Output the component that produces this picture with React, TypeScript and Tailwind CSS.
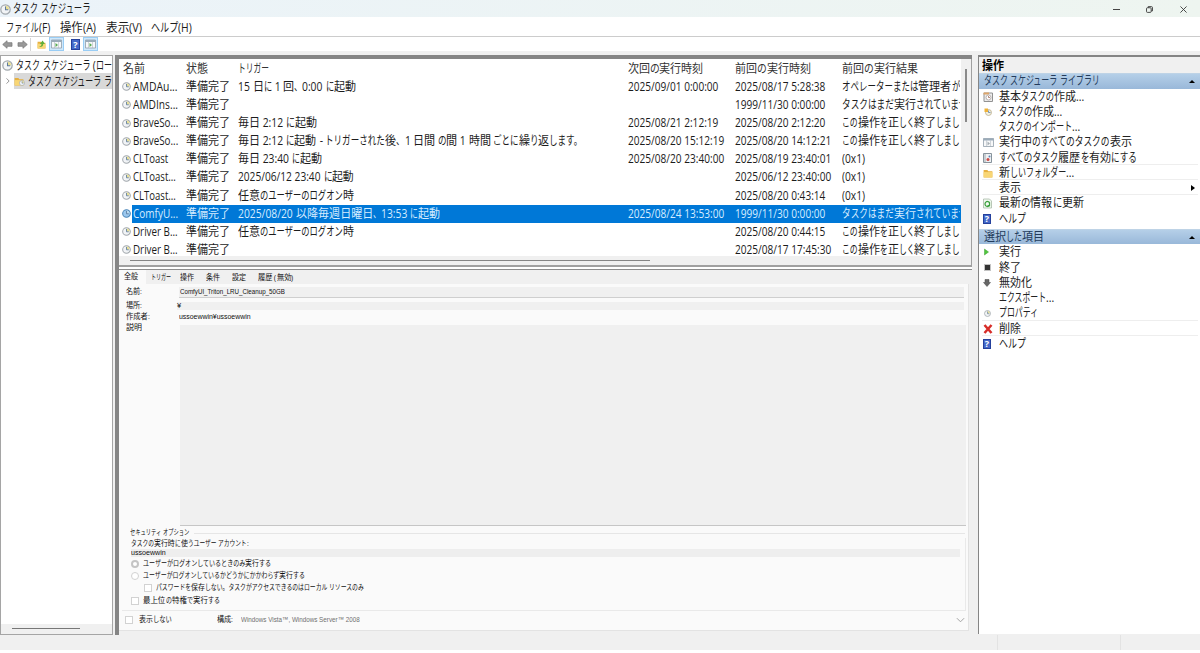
import { useLayoutEffect, useRef, type ReactNode } from "react";

const FONT = "font-['Open_Sans','Noto_Sans_CJK_JP',sans-serif]";

const KANA = /^[\u3001-\u30ff]/;
const KANJI = /^[\u3400-\u9fff]/;

// UI text with condensed kana: kana runs take the room left in the given width,
// unless that would squeeze them too much, then every run shares it
function Label({ text, w, className = "" }: { text: string; w: number; className?: string }) {
  const ref = useRef<HTMLSpanElement>(null);
  const runs = text.match(/[\u3001-\u30ff]+|[\u3400-\u9fff]+|[^\u3001-\u9fff]+/g) ?? [];

  useLayoutEffect(() => {
    if (!ref.current) return;
    const outers = Array.from(ref.current.children) as HTMLElement[];
    const inners = outers.map((o) => o.firstElementChild as HTMLElement);
    const widths = inners.map((el) => el.offsetWidth);
    const base = runs.map((r) => (KANA.test(r) ? 0.74 : KANJI.test(r) ? 0.92 : 0.86));
    let fixed = 0;
    let kana = 0;
    runs.forEach((r, i) => {
      if (KANA.test(r)) kana += widths[i];
      else fixed += widths[i] * base[i];
    });
    const k = kana > 0 ? (w - fixed) / kana : 0;
    const all = w / (fixed + kana * 0.74);
    runs.forEach((r, i) => {
      let s = base[i] * all;
      if (k > 0.62 && k < 0.9) s = KANA.test(r) ? k : base[i];
      outers[i].style.width = `${widths[i] * s}px`;
      inners[i].style.transform = `scaleX(${s})`;
    });
  }, [text, w]);

  return (
    <span ref={ref} className={`flex shrink-0 items-baseline whitespace-pre ${className}`}>
      {runs.map((r, i) => (
        <span key={i} className="block">
          <span className="inline-block origin-left">{r}</span>
        </span>
      ))}
    </span>
  );
}

function Clock({ className = "size-[9px]", selected = false }: { className?: string; selected?: boolean }) {
  return (
    <svg viewBox="0 0 16 16" className={`shrink-0 ${className}`}>
      <circle cx="8" cy="8" r="6.8" fill={selected ? "#9cc8ee" : "#f2f4f6"} stroke={selected ? "#4d86b8" : "#a2a8ad"} strokeWidth="1.8" />
      <path d="M8 8V2.5A5.5 5.5 0 0 1 13.5 8z" fill={selected ? "#b9d9ef" : "#e8df96"} />
      <path d="M8 3.5V8.5H12" fill="none" stroke="#5d7a9c" strokeWidth="1.5" />
    </svg>
  );
}

function HelpIcon({ className = "h-[11px] w-[9px]" }: { className?: string }) {
  return (
    <span className={`flex shrink-0 items-center justify-center border border-[#24409c] bg-[#4468c8] text-[9px] leading-none font-bold text-white ${className}`}>?</span>
  );
}

function FolderIcon({ className = "size-[11px]", arrow = false }: { className?: string; arrow?: boolean }) {
  return (
    <svg viewBox="0 0 16 16" className={`shrink-0 ${className}`}>
      <path d="M1 3h6l1.500 2H15v10H1z" fill="#e6b040" />
      <path d="M1 6.500h14V15H1z" fill="#f8d675" />
      {arrow && <path d="M3 12c3 0 5-2 5-5H5l5-6 4 6h-3c0 4-3 6-8 5z" fill="#5fae3a" />}
    </svg>
  );
}

function WindowIcon({ className = "h-[10px] w-[11px]", mark = "#54a94d" }: { className?: string; mark?: string }) {
  return (
    <svg viewBox="0 0 22 18" className={`shrink-0 ${className}`}>
      <path d="M1 1h20v16H1z" fill="#f7f8f9" stroke="#8b99a5" strokeWidth="1.5" />
      <path d="M1 1h20v4H1z" fill="#9aabb9" />
      <path d="M7 5v12M15 5v12" stroke="#a6b0b8" />
      <path d="M9 7l5 4-5 4z" fill={mark} />
    </svg>
  );
}

function Arrow({ flip = false }: { flip?: boolean }) {
  return (
    <svg viewBox="0 0 12 10" className={`h-[9px] w-[11px] shrink-0 ${flip ? "rotate-180" : ""}`}>
      <path d="M.7 5L5.500.8V3H11v4H5.500v2.200z" fill="#999" stroke="#757575" strokeWidth=".8" />
    </svg>
  );
}

type Task = {
  name: [string, number];
  trigger?: [string, number];
  next?: [string, number];
  prev: [string, number];
  result: [string, number];
  selected?: boolean;
};

const OK: [string, number] = ["この操作を正しく終了しまし", 118];
const NOT_RUN: [string, number] = ["タスクはまだ実行されていませ", 125];

const tasks: Task[] = [
  { name: ["AMDAu...", 45], trigger: ["15 日に 1 回、0:00 に起動", 118], next: ["2025/09/01 0:00:00", 90], prev: ["2025/08/17 5:28:38", 90], result: ["オペレーターまたは管理者が", 118] },
  { name: ["AMDIns...", 45], prev: ["1999/11/30 0:00:00", 90], result: NOT_RUN },
  { name: ["BraveSo...", 45], trigger: ["毎日 2:12 に起動", 79], next: ["2025/08/21 2:12:19", 90], prev: ["2025/08/20 2:12:20", 90], result: OK },
  { name: ["BraveSo...", 45], trigger: ["毎日 2:12 に起動 - トリガーされた後、1 日間 の間 1 時間 ごとに繰り返します。", 345], next: ["2025/08/20 15:12:19", 96], prev: ["2025/08/20 14:12:21", 96], result: OK },
  { name: ["CLToast", 35], trigger: ["毎日 23:40 に起動", 84], next: ["2025/08/20 23:40:00", 96], prev: ["2025/08/19 23:40:01", 96], result: ["(0x1)", 23] },
  { name: ["CLToast...", 43], trigger: ["2025/06/12 23:40 に起動", 116], prev: ["2025/06/12 23:40:00", 96], result: ["(0x1)", 23] },
  { name: ["CLToast...", 43], trigger: ["任意のユーザーのログオン時", 116], prev: ["2025/08/20 0:43:14", 90], result: ["(0x1)", 23] },
  { name: ["ComfyU...", 45], trigger: ["2025/08/20 以降毎週日曜日、13:53 に起動", 202], next: ["2025/08/24 13:53:00", 96], prev: ["1999/11/30 0:00:00", 90], result: NOT_RUN, selected: true },
  { name: ["Driver B...", 45], trigger: ["任意のユーザーのログオン時", 116], prev: ["2025/08/20 0:44:15", 90], result: OK },
  { name: ["Driver B...", 45], prev: ["2025/08/17 17:45:30", 96], result: OK },
];

const COLS = "grid grid-cols-[14px_53px_52px_389.500px_107.500px_107px_118px] items-center";

function TaskList() {
  return (
    <div className="flex h-[206px] bg-[#f0f0f0]">
      <div className="w-[842px] overflow-hidden">
        <div className="h-[197px] overflow-hidden bg-white text-[12px] leading-[18px] text-[#1c1c1c]">
          <div className={`${COLS} h-[18.800px] pt-px text-[#333]`}>
            <Label text="名前" w={22} className="col-span-2 pl-1" />
            <Label text="状態" w={22} />
            <Label text="トリガー" w={31} />
            <Label text="次回の実行時刻" w={76} />
            <Label text="前回の実行時刻" w={76} />
            <Label text="前回の実行結果" w={76} />
          </div>
          {tasks.map((t, i) => (
            <div
              key={i}
              className={`${COLS} h-[18.120px] ${t.selected ? "bg-[linear-gradient(to_right,white_13px,#0078d7_13px)] text-[#d5ecff]" : ""}`}
            >
              <Clock className="ml-[3px] size-[9px]" selected={t.selected} />
              <Label text={t.name[0]} w={t.name[1]} />
              <Label text="準備完了" w={44} />
              {t.trigger ? <Label text={t.trigger[0]} w={t.trigger[1]} /> : <span />}
              {t.next ? <Label text={t.next[0]} w={t.next[1]} /> : <span />}
              <Label text={t.prev[0]} w={t.prev[1]} />
              <div className="overflow-hidden">
                <Label text={t.result[0]} w={t.result[1]} />
              </div>
            </div>
          ))}
        </div>
        <div className="mt-[4px] ml-[11px] h-px w-[520px] bg-[#858585]" />
      </div>
      <div className="flex-1 pt-[10px] pl-[4px]">
        <div className="h-[53px] w-[1.500px] bg-[#8a8a8a]" />
      </div>
    </div>
  );
}

function Box({ round = false, checked = false }: { round?: boolean; checked?: boolean }) {
  return (
    <span
      className={`size-[8px] shrink-0 bg-white ${round ? "rounded-full" : ""} ${checked ? "border-[2.500px] border-[#c4c4c4]" : "border border-[#d2d2d2]"}`}
    />
  );
}

function Details() {
  return (
    <div className="h-[364px] bg-[#f0f0f0] font-['Liberation_Sans','Noto_Sans_CJK_JP',sans-serif] text-[7.500px] leading-[10px] text-[#111]">
      <div className="flex h-[14px] items-end">
        <div className="flex h-[14px] w-[27px] items-center bg-[#fafafa] pl-[5px]">
          <Label text="全般" w={14} />
        </div>
        <div className="flex h-[13px] items-center">
          <Label text="トリガー" w={20} className="ml-[5px]" />
          <Label text="操作" w={14} className="ml-[9px]" />
          <Label text="条件" w={14} className="ml-[12px]" />
          <Label text="設定" w={14} className="ml-[12px]" />
          <Label text="履歴 (無効)" w={36} className="ml-[12px]" />
        </div>
      </div>
      <div className="h-[347px] w-[850px] border-r border-b border-[#e3e3e3] bg-[#fafafa]">
        <div className="flex h-[16.500px] items-center pl-[7px]">
          <Label text="名前:" w={16} className="w-[53px]" />
          <div className="flex h-[11px] w-[785px] items-center border-b border-[#cfcfcf] bg-[#f0f0f0]">
            <Label text="ComfyUI_Triton_LRU_Cleanup_50GB" w={105} className="pl-px" />
          </div>
        </div>
        <div className="flex h-[11px] items-center pl-[7px]">
          <Label text="場所:" w={16} className="w-[51px]" />
          <div className="flex h-[8px] w-[787px] items-center bg-[#f0f0f0]">
            <Label text="¥" w={4} />
          </div>
        </div>
        <div className="flex h-[11px] items-center pl-[7px]">
          <Label text="作成者:" w={24} className="w-[53px]" />
          <Label text="ussoewwin¥ussoewwin" w={72} />
        </div>
        <div className="flex h-[204.500px] items-start pl-[7px]">
          <div className="h-[10px] w-[54px] overflow-hidden">
            <Label text="説明" w={16} />
          </div>
          <div className="mt-[2px] h-[201px] w-[786px] border-b border-[#c6c6c6] bg-[#f0f0f0]" />
        </div>
        <div className="flex h-[11px] items-end">
          <Label text="セキュリティ オプション" w={60} className="ml-[11px]" />
          <span className="mb-[4px] ml-1 h-px w-[771px] bg-[#e6e6e6]" />
        </div>
        <div className="ml-[3px] h-[73px] w-[844px] border-r border-b border-[#e9e9e9] pl-[9px]">
          <Label text="タスクの実行時に使うユーザー アカウント:" w={118} className="h-[11px] pt-px" />
          <div className="flex h-[8px] w-[829px] items-center bg-[#eeeeee]">
            <Label text="ussoewwin" w={35} />
          </div>
          <div className="flex h-[13px] items-center gap-[4px]">
            <Box round checked />
            <Label text="ユーザーがログオンしているときのみ実行する" w={128} />
          </div>
          <div className="flex h-[12px] items-center gap-[4px]">
            <Box round />
            <Label text="ユーザーがログオンしているかどうかにかかわらず実行する" w={162} />
          </div>
          <div className="flex h-[12px] items-center gap-[4px] pl-[13px]">
            <Box />
            <Label text="パスワードを保存しない。タスクがアクセスできるのはローカル リソースのみ" w={208} />
          </div>
          <div className="flex h-[14px] items-center gap-[4px]">
            <Box />
            <Label text="最上位の特権で実行する" w={77} />
          </div>
        </div>
        <div className="flex h-[17px] items-center pl-[6px]">
          <Box />
          <Label text="表示しない" w={33} className="ml-[6px]" />
          <Label text="構成:" w={16} className="ml-[45px]" />
          <Label text="Windows Vista™, Windows Server™ 2008" w={119} className="ml-[8px] text-[#707070]" />
          <svg viewBox="0 0 10 6" className="ml-[596px] h-[6px] w-[9px]">
            <path d="M1 1l4 4 4-4" fill="none" stroke="#999" />
          </svg>
        </div>
      </div>
    </div>
  );
}

function ActionRow({ icon, text, w, line = false, more = false }: { icon?: ReactNode; text: string; w: number; line?: boolean; more?: boolean }) {
  return (
    <div className={`ml-[3px] flex h-[15.250px] w-[216px] items-center border-b pt-[2px] ${line ? "border-[#eeeeee]" : "border-transparent"}`}>
      <span className="flex w-[17px] items-center pl-px">{icon}</span>
      <Label text={text} w={w} />
      {more && <span className="mr-[3px] ml-auto border-y-[3.500px] border-l-[4px] border-y-transparent border-l-black" />}
    </div>
  );
}

function ActionHeader({ text, w }: { text: string; w: number }) {
  return (
    <div className="flex h-[15.500px] items-center justify-between border-t border-[#bed3e6] bg-linear-to-b from-[#b5cfe8] to-[#99b8d9] pr-[5px] pl-[5px] text-[#233c5c]">
      <Label text={text} w={w} />
      <span className="border-x-[3px] border-b-[3.500px] border-x-transparent border-b-black" />
    </div>
  );
}

function Actions() {
  return (
    <aside className="h-[579px] w-[222px] overflow-hidden border-t-2 border-l-[1.500px] border-[#858585] bg-white text-[12px] leading-[14px] text-[#222]">
      <div className="h-[16px] bg-[#f0f0f0] pt-[2px] pl-[3px] font-bold text-black">
        <Label text="操作" w={22} />
      </div>
      <ActionHeader text="タスク スケジューラ ライブラリ" w={116} />
      <ActionRow
        text="基本タスクの作成..."
        w={85}
        icon={
          <svg viewBox="0 0 20 20" className="size-[10px]">
            <path d="M2 2h17v17H2z" fill="#ececec" stroke="#929292" strokeWidth="2" />
            <path d="M1 1h11v4H1z" fill="#dea66b" />
            <circle cx="11" cy="11" r="5" fill="#fff" stroke="#a59b99" strokeWidth="1.500" />
            <path d="M11 8v3h3" fill="none" stroke="#9a6251" strokeWidth="1.500" />
          </svg>
        }
      />
      <ActionRow
        text="タスクの作成..."
        w={63}
        icon={
          <svg viewBox="0 0 16 16" className="ml-px size-[8px]">
            <circle cx="9" cy="9" r="6" fill="#f4f0e0" stroke="#b5aa87" strokeWidth="1.500" />
            <path d="M1 1h7v7H1z" fill="#efb237" />
            <path d="M9 5v4h4" fill="none" stroke="#567ba3" strokeWidth="1.500" />
          </svg>
        }
      />
      <ActionRow text="タスクのインポート..." w={81} />
      <ActionRow text="実行中のすべてのタスクの表示" w={133} icon={<WindowIcon mark="#a5adb3" className="h-[9px] w-[11px]" />} />
      <ActionRow
        text="すべてのタスク履歴を有効にする"
        w={138}
        line
        icon={
          <svg viewBox="0 0 18 20" className="h-[10px] w-[9px]">
            <path d="M1 1h16v18H1z" fill="#eef1f3" stroke="#87939c" strokeWidth="2" />
            <path d="M4 2v16" stroke="#a1abb2" strokeWidth="2" />
            <circle cx="10" cy="13" r="3" fill="#cc4945" />
            <circle cx="13" cy="7" r="2" fill="#5c83b4" />
          </svg>
        }
      />
      <ActionRow text="新しいフォルダー..." w={75} line icon={<FolderIcon className="size-[10px]" />} />
      <ActionRow text="表示" w={22} line more />
      <ActionRow
        text="最新の情報に更新"
        w={85}
        icon={
          <svg viewBox="0 0 18 20" className="h-[11px] w-[9px]">
            <path d="M1 1h12l4 4v14H1z" fill="#f3faf1" stroke="#a4b6a3" strokeWidth="1.500" />
            <path d="M13 14a5 5 0 1 1 0-6v6h-4" fill="none" stroke="#3ba03e" strokeWidth="2.500" />
          </svg>
        }
      />
      <ActionRow text="ヘルプ" w={27} icon={<HelpIcon className="h-[10px] w-[8px]" />} />
      <div className="h-[3px]" />
      <ActionHeader text="選択した項目" w={60} />
      <ActionRow
        text="実行"
        w={22}
        icon={
          <svg viewBox="0 0 10 14" className="ml-px h-[8px] w-[5px]">
            <path d="M1 1l8 6-8 6z" fill="#50c63c" stroke="#3a9f31" />
          </svg>
        }
      />
      <ActionRow text="終了" w={22} icon={<span className="ml-px size-[7px] border border-[#c3c3c3] bg-[#333]" />} />
      <ActionRow
        text="無効化"
        w={33}
        icon={
          <svg viewBox="0 0 16 16" className="size-[8px]">
            <path d="M4 1h8v6h3l-7 8-7-8h3z" fill="#666" stroke="#444" />
          </svg>
        }
      />
      <ActionRow text="エクスポート..." w={55} />
      <ActionRow text="プロパティ" w={39} line icon={<Clock className="ml-px size-[7px]" />} />
      <ActionRow
        text="削除"
        w={22}
        line
        icon={
          <svg viewBox="0 0 20 20" className="size-[10px]">
            <path d="M3 2l14 16M17 2L3 18" stroke="#d72d28" strokeWidth="5" />
          </svg>
        }
      />
      <ActionRow text="ヘルプ" w={27} icon={<HelpIcon className="h-[10px] w-[8px]" />} />
    </aside>
  );
}

export default function App() {
  return (
    <div className={`${FONT} flex h-[653px] w-[1200px] flex-col overflow-hidden bg-white text-[12px] text-[#1c1c1c]`}>
      {/* Title bar */}
      <header className="flex h-[17px] shrink-0 items-center bg-linear-to-r from-[#ebf3f9] to-[#eef5f0] pt-px leading-[16px]">
        <Clock className="size-[11px]" />
        <Label text="タスク スケジューラ" w={77} className="ml-[2px]" />
        <div className="ml-auto flex items-center pr-[13px]">
          <span className="h-px w-[7px] bg-[#444]" />
          <svg viewBox="0 0 8 8" className="ml-[26px] size-[7px]" fill="none" stroke="#333">
            <rect x=".6" y="2" width="5.300" height="5.300" rx="1" />
            <path d="M2.500 2V.7h3.700Q7.400.7 7.400 2v3.600H6" />
          </svg>
          <svg viewBox="0 0 8 8" className="ml-[27px] size-[7px]" stroke="#333">
            <path d="M.5.5l7 7M7.500.5l-7 7" />
          </svg>
        </div>
      </header>

      {/* Menu */}
      <nav className="flex h-[20px] shrink-0 items-center border-b border-[#cccccc] pt-[2px] pl-[6px] leading-[16px]">
        <Label text="ファイル(F)" w={44} />
        <Label text="操作(A)" w={36} className="ml-[10px]" />
        <Label text="表示(V)" w={36} className="ml-[10px]" />
        <Label text="ヘルプ(H)" w={41} className="ml-[9px]" />
      </nav>

      {/* Toolbar */}
      <div className="flex h-[14px] shrink-0 items-center pl-[2px]">
        <Arrow />
        <span className="w-[4px]" />
        <Arrow flip />
        <span className="ml-[2px] h-[13px] w-px bg-[#d6d6d6]" />
        <FolderIcon className="ml-[6px] size-[9px]" arrow />
        <span className="ml-[3px] flex h-[14px] w-[15px] items-center justify-center border border-[#99cdf5] bg-[#cfe8fb]">
          <WindowIcon />
        </span>
        <HelpIcon className="ml-[7px] h-[11px] w-[9px]" />
        <span className="ml-[3px] flex h-[14px] w-[15px] items-center justify-center border border-[#99cdf5] bg-[#cfe8fb]">
          <WindowIcon />
        </span>
      </div>

      <main className="flex h-[599px] shrink-0 bg-[#f0f0f0] pt-[4px]">
        {/* Tree */}
        <aside className="flex h-[580px] w-[113px] flex-col overflow-hidden border border-[#a5a5a5] bg-white leading-[17px]">
          <div className="flex h-[17px] items-center pt-px pl-px">
            <Clock className="size-[11px]" />
            <Label text="タスク スケジューラ (ロー" w={96} className="ml-[3px]" />
          </div>
          <div className="flex h-[16px] items-center">
            <svg viewBox="0 0 5 8" className="ml-[5px] h-[6px] w-[4px]">
              <path d="M.5.5L4 4 .5 7.500" fill="none" stroke="#777" />
            </svg>
            <div className="ml-[4px] flex h-[16px] flex-1 items-center overflow-hidden bg-[#d9d9d9]">
              <span className="flex items-end">
                <FolderIcon className="size-[10px]" />
                <Clock className="-ml-[5px] size-[6px]" />
              </span>
              <Label text="タスク スケジューラ ラ" w={84} className="ml-[3px]" />
            </div>
          </div>
          <div className="mt-auto h-[10px] bg-[#f0f0f0] pt-[4px] pl-[11px]">
            <div className="h-px w-[68px] bg-[#777]" />
          </div>
        </aside>

        {/* Task list and details */}
        <section className="ml-[2px] h-[580px] w-[857px] border-t-[4px] border-l-[4px] border-[#858585] bg-[#f0f0f0]">
          <div className="h-[208px] border-r-[1.500px] border-b-2 border-[#a0a0a0]">
            <TaskList />
          </div>
          <div className="h-[3px] border-b border-[#8c8c8c] bg-white" />
          <Details />
        </section>

        <div className="w-[6px]" />
        <Actions />
      </main>

      {/* Status bar */}
      <footer className="-mt-[15px] flex h-[15px] shrink-0 bg-[#f0f0f0]">
        <span className="w-[998px] border-r border-[#e3e3e3]" />
        <span className="w-[123px] border-r border-[#e3e3e3]" />
      </footer>
      <div className="h-[3px] shrink-0 bg-white" />
    </div>
  );
}
